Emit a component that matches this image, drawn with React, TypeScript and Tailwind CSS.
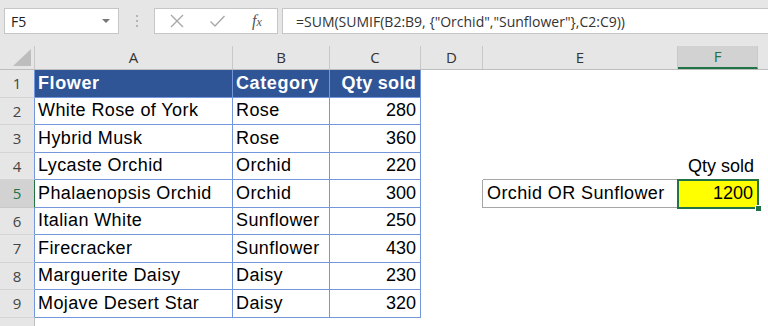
import clsx from "clsx";

const cn = clsx;

const rows = [
  ["White Rose of York", "Rose", "280"],
  ["Hybrid Musk", "Rose", "360"],
  ["Lycaste Orchid", "Orchid", "220"],
  ["Phalaenopsis Orchid", "Orchid", "300"],
  ["Italian White", "Sunflower", "250"],
  ["Firecracker", "Sunflower", "430"],
  ["Marguerite Daisy", "Daisy", "230"],
  ["Mojave Desert Star", "Daisy", "320"],
];

const cols = [
  { name: "A", w: "w-[198px]" },
  { name: "B", w: "w-[97px]" },
  { name: "C", w: "w-[91px]" },
  { name: "D", w: "w-[62px]" },
  { name: "E", w: "w-[195px]" },
  { name: "F", w: "w-[80px]" },
];

const uiFont = { fontFamily: '"Open Sans", "Noto Sans", sans-serif' };

const RowHeader = ({ n, selected, last }: { n: number; selected?: boolean; last?: boolean }) => (
  <div
    className={cn(
      "w-[35px] shrink-0 flex items-center justify-center border-b border-r text-[15px] tracking-normal",
      selected
        ? "bg-[#d2d2d2] text-[#217346] border-r-[#217346] border-b-[#c8c8c8]"
        : "bg-[#e6e6e6] text-[#444] border-b-[#d4d4d4]",
      !selected && (last ? "border-r-[#c0c0c0]" : "border-r-[#7396dc]")
    )}
    style={uiFont}
  >
    {n}
  </div>
);

export default function App() {
  return (
    <div
      className="w-[768px] h-[326px] overflow-hidden bg-white flex flex-col"
      style={{ fontFamily: '"Liberation Sans", Arial, sans-serif' }}
    >
      {/* formula bar */}
      <div className="h-[46px] shrink-0 bg-[#e6e6e6] flex items-start pt-[8px] pl-[4px]">
        <div
          className="w-[115px] h-[26px] bg-white border border-[#c6c6c6] flex items-center justify-between pl-[6px] pr-[8px] text-[14px] text-[#222]"
          style={uiFont}
        >
          <span>F5</span>
          <span className="w-0 h-0 border-l-[4px] border-r-[4px] border-t-[4px] border-l-transparent border-r-transparent border-t-[#777]" />
        </div>
        <div className="w-[35px] h-[26px] flex flex-col items-center justify-center gap-[3px]">
          <span className="w-[2px] h-[2px] bg-[#b4b4b4]" />
          <span className="w-[2px] h-[2px] bg-[#b4b4b4]" />
          <span className="w-[2px] h-[2px] bg-[#b4b4b4]" />
        </div>
        <div className="w-[124px] h-[26px] bg-white border border-[#c6c6c6] flex items-center pl-[14px] gap-[24px]">
          <svg width="16" height="16" viewBox="0 0 16 16">
            <path d="M2 2L14 14M14 2L2 14" stroke="#a8a8a8" strokeWidth="1.4" fill="none" />
          </svg>
          <svg width="17" height="16" viewBox="0 0 17 16">
            <path d="M1.5 8.5L6 13L15.5 3" stroke="#a8a8a8" strokeWidth="1.4" fill="none" />
          </svg>
          <span
            className="text-[16px] italic text-[#555] ml-[2px]"
            style={{ fontFamily: '"Liberation Serif", "Times New Roman", serif' }}
          >
            f<span className="text-[12px]">x</span>
          </span>
        </div>
        <div
          className="flex-1 ml-[4px] h-[26px] bg-white border border-[#c6c6c6] border-r-0 flex items-center pl-[13px] text-[14px] text-[#333] whitespace-nowrap"
          style={uiFont}
        >
          =SUM(SUMIF(B2:B9, {"{"}"Orchid","Sunflower"{"}"},C2:C9))
        </div>
      </div>

      {/* column headers */}
      <div className="h-[24px] shrink-0 flex bg-[#e6e6e6] border-b border-[#bdbdbd]" style={uiFont}>
        <div className="w-[35px] shrink-0 border-r border-[#c8c8c8] flex items-end justify-end pr-[3px] pb-[3px]">
          <svg width="18" height="17" viewBox="0 0 18 17">
            <path d="M18 0L18 17L0 17Z" fill="#bdbdbd" />
          </svg>
        </div>
        {cols.map((c) => (
          <div
            key={c.name}
            className={cn(
              c.w,
              "shrink-0 flex items-center justify-center text-[15px] border-r border-[#c8c8c8]",
              c.name === "F"
                ? "bg-[#d2d2d2] text-[#217346] border-b-2 border-b-[#217346]"
                : "text-[#333]"
            )}
          >
            {c.name}
          </div>
        ))}
        <div className="flex-1" />
      </div>

      {/* row 1: table header */}
      <div className="h-[27.5px] shrink-0 flex text-[18px] tracking-[0.6px]">
        <RowHeader n={1} />
        <div className="w-[198px] shrink-0 bg-[#2f5597] border-r border-b border-[#7396dc] flex items-center pl-[3px] text-white font-bold">
          Flower
        </div>
        <div className="w-[97px] shrink-0 bg-[#2f5597] border-r border-b border-[#7396dc] flex items-center pl-[3px] text-white font-bold">
          Category
        </div>
        <div className="w-[91px] shrink-0 bg-[#2f5597] border-r border-b border-[#7396dc] flex items-center justify-end pr-[4px] text-white font-bold tracking-[0.3px]">
          Qty sold
        </div>
      </div>

      {rows.map((r, i) => {
        const n = i + 2;
        return (
          <div key={n} className="h-[27.5px] shrink-0 flex text-[18px] text-black tracking-[0.4px]">
            <RowHeader n={n} selected={n === 5} />
            <div className="w-[198px] shrink-0 border-r border-b border-[#7396dc] flex items-center pl-[3px] whitespace-nowrap">
              {r[0]}
            </div>
            <div className="w-[97px] shrink-0 border-r border-b border-[#7396dc] flex items-center pl-[3px]">
              {r[1]}
            </div>
            <div className="w-[91px] shrink-0 border-r border-b border-[#7396dc] flex items-center justify-end pr-[4px] tracking-normal">
              {r[2]}
            </div>
            <div
              className={cn(
                "w-[62px] shrink-0",
                n === 5 && "border-r border-[#a6a6a6]"
              )}
            />
            {n === 4 && (
              <>
                <div className="w-[195px] shrink-0 border-b border-[#a6a6a6]" />
                <div className="w-[80px] shrink-0 flex items-center justify-end pr-[4px] tracking-normal">
                  Qty sold
                </div>
              </>
            )}
            {n === 5 && (
              <>
                <div className="w-[195px] shrink-0 border-b border-[#a6a6a6] flex items-center pl-[4px] whitespace-nowrap">
                  Orchid OR Sunflower
                </div>
                <div className="w-[80px] shrink-0 relative bg-[#ffff00] flex items-center justify-end pr-[5px] tracking-normal">
                  1200
                  <div className="absolute -left-[1px] -top-[1px] -right-[1px] -bottom-[1px] border-2 border-[#217346]" />
                  <div className="absolute -right-[4px] -bottom-[4px] w-[7px] h-[7px] bg-[#217346] border border-white" />
                </div>
              </>
            )}
          </div>
        );
      })}

      <div className="flex-1 flex">
        <div className="w-[35px] shrink-0 bg-[#e6e6e6] border-r border-[#c0c0c0]" />
      </div>
    </div>
  );
}
